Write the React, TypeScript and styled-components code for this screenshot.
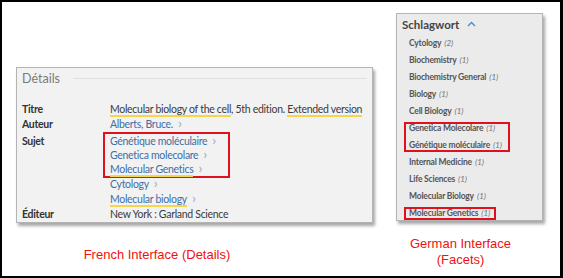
import React from 'react'
import styled, { createGlobalStyle } from 'styled-components'

const GlobalStyle = createGlobalStyle`
  html, body {
    margin: 0;
    padding: 0;
    background: #ffffff;
  }
`;

const Frame = styled.div`
  box-sizing: border-box;
  width: 563px;
  height: 278px;
  border: 2px solid #000;
  border-right-width: 3px;
  background: #fff;
  display: flex;
  font-family: Lato, "Liberation Sans", sans-serif;
`;

const LeftColumn = styled.div`
  display: flex;
  flex-direction: column;
  padding: 65px 0 0 14px;
  width: 357px;
`;

const RightColumn = styled.div`
  display: flex;
  flex-direction: column;
  padding: 11px 0 0 23px;
  width: 147px;
`;

const DetailsPanel = styled.div`
  box-sizing: border-box;
  width: 357px;
  height: 156px;
  background: #f2f2f2;
  border: 1px solid #b4b4b4;
  box-shadow: 2px 3px 3px rgba(0, 0, 0, 0.35);
  padding: 1px 5px 0 5px;
`;

const PanelHeading = styled.div`
  display: flex;
  align-items: center;
  gap: 13px;
  height: 18px;
  font-size: 12.5px;
  color: #7a7a7a;
  margin-bottom: 15px;
  &::after {
    content: '';
    flex: 1;
    height: 1px;
    background: #dedede;
  }
`;

const Row = styled.div`
  display: grid;
  grid-template-columns: 88px 1fr;
  font-size: 10.5px;
  letter-spacing: -0.3px;
  line-height: 15px;
`;

const Label = styled.div<{ $pad?: number }>`
  color: #333;
  font-weight: 700;
  height: 15px;
  padding-top: ${p => p.$pad || 0}px;
`;

const Values = styled.div`
  display: flex;
  flex-direction: column;
  align-items: flex-start;
`;

const Plain = styled.div`
  color: #3b3b3b;
  white-space: nowrap;
  height: 15px;
`;

const Marked = styled.span`
  border-bottom: 2px solid #f6d54a;
  line-height: 12px;
  display: inline-block;
`;

const Link = styled.div`
  color: #3e6ea5;
  white-space: nowrap;
  height: 15px;
  &::after {
    content: '›';
    color: #98abc0;
    margin-left: 5px;
    font-size: 14px;
    line-height: 0;
  }
`;

const RedBox = styled.div<{ $w: number }>`
  box-sizing: border-box;
  width: ${p => p.$w}px;
  border: 2px solid #e0101e;
  margin: 0 0 -1px -7px;
  padding: 0 0 0 5px;
  display: flex;
  flex-direction: column;
  align-items: flex-start;
  line-height: 14px;
  ${Link} {
    height: 14px;
  }
`;

const Caption = styled.div<{ $left: number; $top: number }>`
  font-family: "Liberation Sans", Arial, sans-serif;
  font-size: 13px;
  line-height: 16px;
  color: #ee1111;
  text-align: center;
  margin-left: ${p => p.$left}px;
  margin-top: ${p => p.$top}px;
`;

const FacetPanel = styled.div`
  box-sizing: border-box;
  width: 147px;
  height: 208px;
  background: #ebebeb;
  border: 1px solid #b4b4b4;
  box-shadow: 2px 3px 3px rgba(0, 0, 0, 0.35);
  padding: 1px 5px 0 5px;
`;

const FacetTitle = styled.div`
  display: flex;
  align-items: center;
  gap: 8px;
  font-size: 11.5px;
  font-weight: 700;
  color: #444;
  height: 18px;
  margin-bottom: 6px;
`;

const FacetList = styled.div`
  display: flex;
  flex-direction: column;
  gap: 8px;
`;

const FacetItem = styled.div`
  font-size: 8.5px;
  letter-spacing: -0.2px;
  font-weight: 700;
  color: #555;
  height: 9px;
  line-height: 9px;
  padding-left: 7px;
  white-space: nowrap;
  em {
    font-weight: 400;
    color: #777;
    margin-left: 3px;
  }
`;

const FacetBox = styled.div<{ $w: number }>`
  box-sizing: border-box;
  width: ${p => p.$w}px;
  border: 2px solid #e0101e;
  margin: -2px 0 -2px 2px;
  display: flex;
  flex-direction: column;
  gap: 8px;
  ${FacetItem} {
    padding-left: 3px;
  }
`;

function Chevron() {
  return (
    <svg width="9" height="6" viewBox="0 0 9 6">
      <path d="M1 5 L4.5 1.5 L8 5" stroke="#4b8bd0" strokeWidth="1.4" fill="none" />
    </svg>
  )
}

const facets1 = [
  ['Cytology', '2'],
  ['Biochemistry', '1'],
  ['Biochemistry General', '1'],
  ['Biology', '1'],
  ['Cell Biology', '1'],
]

const facets2 = [
  ['Internal Medicine', '1'],
  ['Life Sciences', '1'],
  ['Molecular Biology', '1'],
]

function App() {
  return (
    <Frame>
      <GlobalStyle />
      <LeftColumn>
        <DetailsPanel>
          <PanelHeading>Détails</PanelHeading>
          <Row>
            <Label>Titre</Label>
            <Values>
              <Plain>
                <Marked>Molecular biology of the cell</Marked>, 5th edition. <Marked>Extended version</Marked>
              </Plain>
            </Values>
          </Row>
          <Row>
            <Label>Auteur</Label>
            <Values>
              <Link>Alberts, Bruce.</Link>
            </Values>
          </Row>
          <Row>
            <Label $pad={2}>Sujet</Label>
            <Values>
              <RedBox $w={127}>
                <Link>Génétique moléculaire</Link>
                <Link>Genetica molecolare</Link>
                <Link><Marked>Molecular Genetics</Marked></Link>
              </RedBox>
              <Link>Cytology</Link>
              <Link><Marked>Molecular biology</Marked></Link>
            </Values>
          </Row>
          <Row>
            <Label>Éditeur</Label>
            <Values>
              <Plain>New York : Garland Science</Plain>
            </Values>
          </Row>
        </DetailsPanel>
        <Caption $left={-75} $top={24}>French Interface (Details)</Caption>
      </LeftColumn>
      <RightColumn>
        <FacetPanel>
          <FacetTitle>Schlagwort <Chevron /></FacetTitle>
          <FacetList>
            {facets1.map(([name, n]) => (
              <FacetItem key={name}>{name}<em>({n})</em></FacetItem>
            ))}
            <FacetBox $w={106}>
              <FacetItem>Genetica Molecolare<em>(1)</em></FacetItem>
              <FacetItem>Génétique moléculaire<em>(1)</em></FacetItem>
            </FacetBox>
            {facets2.map(([name, n]) => (
              <FacetItem key={name}>{name}<em>({n})</em></FacetItem>
            ))}
            <FacetBox $w={92}>
              <FacetItem>Molecular Genetics<em>(1)</em></FacetItem>
            </FacetBox>
          </FacetList>
        </FacetPanel>
        <Caption $left={-18} $top={15}>German Interface<br />(Facets)</Caption>
      </RightColumn>
    </Frame>
  )
}

export default App
